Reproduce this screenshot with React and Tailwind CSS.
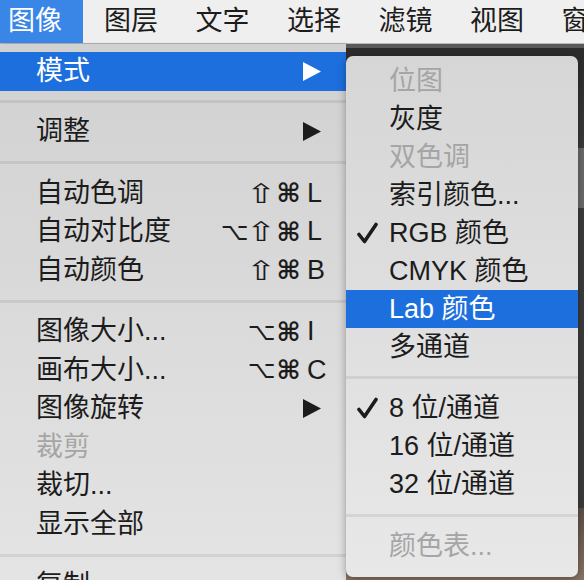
import React from 'react';

const FONT = "font-['Liberation_Sans','Noto_Sans_CJK_SC',sans-serif]";

const menuBar = ['图层', '文字', '选择', '滤镜', '视图', '窗口'];

const mainItems = [
  { label: '模式', sub: true, active: true },
  { sep: 22 },
  { label: '调整', sub: true },
  { sep: 23 },
  { label: '自动色调', mods: ['⇧', '⌘'], k: 'L' },
  { label: '自动对比度', mods: ['⌥', '⇧', '⌘'], k: 'L' },
  { label: '自动颜色', mods: ['⇧', '⌘'], k: 'B' },
  { sep: 23 },
  { label: '图像大小...', mods: ['⌥', '⌘'], k: 'I' },
  { label: '画布大小...', mods: ['⌥', '⌘'], k: 'C' },
  { label: '图像旋转', sub: true },
  { label: '裁剪', disabled: true },
  { label: '裁切...' },
  { label: '显示全部' },
  { sep: 23 },
  { label: '复制' },
];

const subItems = [
  { label: '位图', disabled: true },
  { label: '灰度' },
  { label: '双色调', disabled: true },
  { label: '索引颜色...' },
  { label: 'RGB 颜色', checked: true },
  { label: 'CMYK 颜色' },
  { label: 'Lab 颜色', active: true },
  { label: '多通道' },
  { sep: 23 },
  { label: '8 位/通道', checked: true },
  { label: '16 位/通道' },
  { label: '32 位/通道' },
  { sep: 24 },
  { label: '颜色表...', disabled: true },
];

// per-glyph tweaks so the DejaVu symbols get the weight/width of the mac ones
const modClass = {
  '⌥': 'font-normal text-[24px]',
  '⇧': 'inline-block scale-x-[1.35] font-normal text-[27px]',
  '⌘': 'font-bold text-[26px]',
};

const Separator = ({ h }) => (
  <div className="flex items-center" style={{ height: h }}>
    <div className="h-[3px] w-full bg-black/[0.075]" />
  </div>
);

const Arrow = () => (
  <svg className="mr-[6px]" width="18" height="19" viewBox="0 0 18 19">
    <polygon points="0,0 18,9.5 0,19" fill="currentColor" />
  </svg>
);

const Check = () => (
  <svg width="21" height="22" viewBox="0 0 21 22">
    <path d="M2 12.5 L7.5 19.5 L19 2.5" fill="none" stroke="currentColor" strokeWidth="3.6" strokeLinecap="round" strokeLinejoin="round" />
  </svg>
);

const Shortcut = ({ mods, k }) => (
  <div className="flex items-center">
    {mods.map((m, i) => (
      <span key={i} className="flex w-[27px] justify-center font-['DejaVu_Sans',sans-serif] leading-none">
        <span className={modClass[m]}>{m}</span>
      </span>
    ))}
    <span className="ml-[5px] w-[20px] text-[27px] leading-none">{k}</span>
  </div>
);

const rowColor = (item) =>
  item.active ? 'bg-[#1d6fdd] text-white' : item.disabled ? 'text-[#a5a5a5]' : 'text-[#1c1c1c]';

const MainRow = ({ item }) => (
  <div className={`flex h-[38.5px] items-center whitespace-nowrap pl-[36px] pr-[19px] ${rowColor(item)}`}>
    <span className="flex-1 text-[27px] leading-none">{item.label}</span>
    {item.sub && <Arrow />}
    {item.k && <Shortcut mods={item.mods} k={item.k} />}
  </div>
);

const SubRow = ({ item }) => (
  <div className={`flex h-[38px] items-center whitespace-nowrap ${rowColor(item)}`}>
    <div className="flex w-[43px] items-center pl-[11px]">{item.checked && <Check />}</div>
    <span className="text-[27px] leading-none">{item.label}</span>
  </div>
);

export default function App() {
  return (
    <div className={`relative h-[580px] w-[584px] overflow-hidden bg-[#3a3a3a] ${FONT}`}>
      {/* menu bar */}
      <div className="flex h-[44px] items-center whitespace-nowrap border-b border-[#b9b9b9] bg-[#efefef] text-[27px] leading-none text-[#1c1c1c]">
        <div className="flex h-full shrink-0 items-center bg-[#3a86e7] pl-[8px] pr-[21px] text-white">图像</div>
        <div className="ml-[21px] flex shrink-0 gap-[37.5px]">
          {menuBar.map((m) => (
            <span key={m}>{m}</span>
          ))}
        </div>
      </div>

      <div className="flex h-[536px]">
        {/* main menu */}
        <div className="h-full w-[346px] shrink-0 overflow-hidden bg-linear-to-b from-[#d1d1d1] to-[#e4e4e4] pt-[8px] shadow-[1px_0_2px_rgba(0,0,0,0.25)]">
          {mainItems.map((item, i) =>
            item.sep ? <Separator key={i} h={item.sep} /> : <MainRow key={i} item={item} />
          )}
        </div>

        {/* backdrop behind the submenu */}
        <div className="flex flex-1 flex-col">
          <div className="h-[4px] bg-[#5a5a5a]" />
          <div className="h-[100px] bg-linear-to-b from-[#2c2c2c] to-[#3b3b3b]" />
          <div className="h-[60px] bg-[#6a6a6a]" />
          <div className="h-[300px] bg-[#3c3c3c]" />
          <div className="flex-1 bg-linear-to-b from-[#5c4f48] to-[#8a7465]" />
        </div>
      </div>

      {/* submenu */}
      <div className="absolute left-[346px] top-[56px] h-[521px] w-[232px] overflow-hidden rounded-[7px] bg-linear-to-b from-[#d6d6d6] to-[#e8e8e8] pt-[6px] shadow-[0_2px_8px_rgba(0,0,0,0.35)]">
        {subItems.map((item, i) =>
          item.sep ? <Separator key={i} h={item.sep} /> : <SubRow key={i} item={item} />
        )}
      </div>
    </div>
  );
}
